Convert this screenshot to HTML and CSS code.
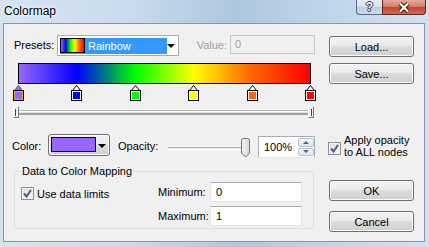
FILE: index.html
```html
<!DOCTYPE html>
<html lang="en">
<head>
    <meta charset="UTF-8">
    <title>Colormap</title>
    <link rel="stylesheet" href="styles.css">
</head>
<body>
<div class="window">
    <div class="titlebar">
        <span class="title">Colormap</span>
        <div class="caption">
            <span class="cap-btn help">?</span>
            <span class="cap-btn close">
                <svg width="14" height="11" viewBox="0 0 14 11"><path d="M3 1.5 L11 9.5 M11 1.5 L3 9.5" stroke="#3b1710" stroke-width="4.2"/><path d="M3 1.5 L11 9.5 M11 1.5 L3 9.5" stroke="#fff" stroke-width="2.2"/></svg>
            </span>
        </div>
    </div>

    <div class="client">
        <div class="main">
            <div class="presets-row">
                <span class="lbl presets-lbl">Presets:</span>
                <div class="combo presets-combo">
                    <div class="combo-sel">
                        <span class="ramp-icon"></span>
                        <span class="combo-text">Rainbow</span>
                    </div>
                    <span class="arrow"></span>
                </div>
                <span class="lbl disabled value-lbl">Value:</span>
                <div class="textbox disabled value-box">0</div>
            </div>

            <div class="ramp-bar"></div>

            <div class="stops">
                <svg width="11" height="17" viewBox="0 0 11 17"><path d="M1.5 6.5 L5.5 1.5 L9.5 6.5 Z" fill="#9966ff" stroke="#5b3fb0"/><rect x="0.5" y="6.5" width="10" height="10" fill="#9966ff" stroke="#000"/><rect x="1.5" y="7.5" width="8" height="8" fill="#9966ff" stroke="#f0a020"/></svg>
                <svg width="11" height="17" viewBox="0 0 11 17"><path d="M1.5 6.5 L5.5 1.5 L9.5 6.5 Z" fill="#fff" stroke="#000"/><rect x="0.5" y="6.5" width="10" height="10" fill="#fff" stroke="#000"/><rect x="2" y="8" width="7" height="7" fill="#0000ff"/></svg>
                <svg width="11" height="17" viewBox="0 0 11 17"><path d="M1.5 6.5 L5.5 1.5 L9.5 6.5 Z" fill="#fff" stroke="#000"/><rect x="0.5" y="6.5" width="10" height="10" fill="#fff" stroke="#000"/><rect x="2" y="8" width="7" height="7" fill="#00ff00"/></svg>
                <svg width="11" height="17" viewBox="0 0 11 17"><path d="M1.5 6.5 L5.5 1.5 L9.5 6.5 Z" fill="#fff" stroke="#000"/><rect x="0.5" y="6.5" width="10" height="10" fill="#fff" stroke="#000"/><rect x="2" y="8" width="7" height="7" fill="#ffff00"/></svg>
                <svg width="11" height="17" viewBox="0 0 11 17"><path d="M1.5 6.5 L5.5 1.5 L9.5 6.5 Z" fill="#fff" stroke="#000"/><rect x="0.5" y="6.5" width="10" height="10" fill="#fff" stroke="#000"/><rect x="2" y="8" width="7" height="7" fill="#ff6600"/></svg>
                <svg width="11" height="17" viewBox="0 0 11 17"><path d="M1.5 6.5 L5.5 1.5 L9.5 6.5 Z" fill="#fff" stroke="#000"/><rect x="0.5" y="6.5" width="10" height="10" fill="#fff" stroke="#000"/><rect x="2" y="8" width="7" height="7" fill="#ff0000"/></svg>
            </div>

            <div class="range">
                <div class="groove"></div>
                <span class="thumb thumb-left"></span>
                <span class="thumb thumb-right"></span>
            </div>

            <div class="color-row">
                <span class="lbl color-lbl">Color:</span>
                <div class="color-combo">
                    <span class="swatch"></span>
                    <span class="arrow"></span>
                </div>
                <span class="lbl opacity-lbl">Opacity:</span>
                <div class="opacity-slider">
                    <div class="track"></div>
                    <svg class="op-thumb" width="9" height="20" viewBox="0 0 9 20">
                        <defs><linearGradient id="tg" x1="0" x2="1" y1="0" y2="0"><stop offset="0" stop-color="#f4f4f4"/><stop offset="1" stop-color="#d9d9d9"/></linearGradient></defs>
                        <path d="M0.5 2.5 Q0.5 0.5 2.5 0.5 H6.5 Q8.5 0.5 8.5 2.5 V15 L4.5 19 L0.5 15 Z" fill="url(#tg)" stroke="#737373"/>
                    </svg>
                </div>
                <div class="spin">
                    <span class="spin-text">100%</span>
                    <div class="spin-btns">
                        <span class="spin-btn"><span class="up"></span></span>
                        <span class="spin-btn"><span class="down"></span></span>
                    </div>
                </div>
            </div>

            <fieldset class="group">
                <legend>Data to Color Mapping</legend>
                <div class="group-body">
                    <label class="check use-limits">
                        <span class="box"><svg width="9" height="9" viewBox="0 0 9 9"><path d="M1 4.5 L3.5 7.5 L8 1" fill="none" stroke="#4a5d92" stroke-width="2"/></svg></span>
                        <span>Use data limits</span>
                    </label>
                    <div class="limits">
                        <span class="lbl">Minimum:</span>
                        <div class="textbox">0</div>
                        <span class="lbl">Maximum:</span>
                        <div class="textbox">1</div>
                    </div>
                </div>
            </fieldset>
        </div>

        <div class="side">
            <button class="btn load">Load...</button>
            <button class="btn save">Save...</button>
            <label class="check apply">
                <span class="box"><svg width="9" height="9" viewBox="0 0 9 9"><path d="M1 4.5 L3.5 7.5 L8 1" fill="none" stroke="#4a5d92" stroke-width="2"/></svg></span>
                <span class="apply-text">Apply opacity<br>to ALL nodes</span>
            </label>
            <button class="btn ok">OK</button>
            <button class="btn cancel">Cancel</button>
        </div>
    </div>
</div>
</body>
</html>
```

FILE: styles.css
```css
body {
    margin: 0;
    font-family: "Liberation Sans", Arial, sans-serif;
    font-size: 11px;
    color: #000;
}
.window {
    width: 429px;
    height: 247px;
    box-sizing: border-box;
    padding: 0 4px 5px 3px;
    display: flex;
    flex-direction: column;
    background: linear-gradient(90deg, #d6e4f2 0%, #c9dbed 30%, #aec7df 55%, #bfd4e9 75%, #d2e1f0 100%);
}
.titlebar {
    height: 23px;
    display: flex;
    align-items: flex-start;
}
.title {
    font-size: 12px;
    line-height: 22px;
    margin-left: 1px;
    text-shadow: 0 0 6px #fff, 0 0 3px #fff;
}
.caption {
    margin-left: auto;
    margin-right: -1px;
    display: flex;
}
.cap-btn {
    height: 14px;
    box-sizing: content-box;
    border: 1px solid #5e6c7d;
    border-top: none;
    display: flex;
    align-items: center;
    justify-content: center;
}
.help {
    width: 25px;
    border-right: none;
    border-bottom-left-radius: 4px;
    background: linear-gradient(#e6eef6 0%, #d3e0ed 50%, #bccfe2 51%, #cbdaea 100%);
    color: #fff;
    font-weight: bold;
    font-size: 12px;
    line-height: 14px;
    text-shadow: 1px 0 0 #333, -1px 0 0 #333, 0 1px 0 #333, 0 -1px 0 #333;
}
.close {
    width: 42px;
    border-bottom-right-radius: 4px;
    border-color: #5a2a22;
    background: linear-gradient(#e3a89c 0%, #d7826f 45%, #c4462f 52%, #cf6a52 100%);
}
.client {
    flex: 1;
    display: flex;
    background: #f0f0f0;
    border: 1px solid #8596aa;
}
.lbl {
    line-height: 13px;
    white-space: nowrap;
}
.disabled {
    color: #a0a0a0;
}
.main {
    margin-left: 8px;
    padding-top: 11px;
    width: 303px;
    display: flex;
    flex-direction: column;
}
.presets-row {
    display: flex;
    align-items: center;
    height: 21px;
}
.presets-lbl {
    margin-left: 2px;
    width: 43px;
}
.combo {
    box-sizing: border-box;
    height: 21px;
    border: 1px solid #abadb3;
    background: #fff;
    padding: 2px;
    display: flex;
    align-items: center;
}
.presets-combo {
    width: 122px;
}
.combo-sel {
    width: 108px;
    height: 16px;
    background: #3399ff;
    display: flex;
    align-items: flex-start;
    align-self: flex-start;
}
.ramp-icon {
    width: 25px;
    height: 15px;
    box-sizing: border-box;
    border: 1px solid #000;
    background: linear-gradient(90deg, #9966ff, #0000ff 20%, #00ff00 40%, #ffff00 60%, #ff6600 80%, #ff0000);
}
.combo-text {
    color: #fff;
    margin-left: 3px;
    line-height: 16px;
}
.arrow {
    width: 0;
    height: 0;
    border-left: 4px solid transparent;
    border-right: 4px solid transparent;
    border-top: 4px solid #000;
    margin-left: auto;
    margin-right: 1px;
}
.value-lbl {
    margin-left: auto;
    margin-right: 3px;
}
.textbox {
    box-sizing: border-box;
    height: 20px;
    border: 1px solid #abadb3;
    border-left-color: #e2e3ea;
    border-right-color: #dbdfe6;
    border-bottom-color: #e3e9ef;
    background: #fff;
    padding-left: 5px;
    line-height: 18px;
}
.value-box {
    width: 85px;
    height: 19px;
    align-self: flex-start;
    background: #f0f0f0;
    border-color: #c7c7c7;
    padding-left: 4px;
    line-height: 17px;
}
.ramp-bar {
    margin: 7px 0 0 6px;
    width: 293px;
    height: 21px;
    box-sizing: border-box;
    border: 1px solid #000;
    background: linear-gradient(90deg, #9966ff, #0000ff 20%, #00ff00 40%, #ffff00 60%, #ff6600 80%, #ff0000);
}
.stops {
    margin-left: 1px;
    width: 303px;
    height: 17px;
    display: flex;
    justify-content: space-between;
}
.stops svg {
    display: block;
}
.range {
    position: relative;
    margin-top: 5px;
    height: 12px;
}
.groove {
    margin: 4px 0 0 2px;
    width: 300px;
    height: 5px;
    background: linear-gradient(#b9b9b9 0 1px, #fff 1px 2px, #e3e3e3 2px 3px, #a0a0a0 3px);
}
.thumb {
    position: absolute;
    top: 0;
    width: 6px;
    height: 12px;
    box-sizing: border-box;
    border: 1px solid #fff;
    border-right-color: #7d7d7d;
    border-bottom-color: #7d7d7d;
    background: #f0f0f0;
}
.thumb::after {
    content: "";
    position: absolute;
    top: 2px;
    bottom: 1px;
    width: 1px;
    background: #404040;
}
.thumb-left {
    left: 1px;
}
.thumb-left::after {
    left: 1px;
}
.thumb-right {
    left: 296px;
}
.thumb-right::after {
    right: 1px;
}
.color-row {
    margin-top: 16px;
    height: 24px;
    display: flex;
    align-items: center;
}
.color-lbl {
    width: 36px;
}
.color-combo {
    box-sizing: border-box;
    width: 62px;
    height: 22px;
    align-self: flex-start;
    border: 1px solid #707070;
    border-radius: 3px;
    padding: 2px 2px 0 2px;
    display: flex;
    align-items: flex-start;
    background: linear-gradient(#f2f2f2 0%, #ebebeb 45%, #dddddd 50%, #cfcfcf 100%);
    box-shadow: inset 0 0 0 1px #fcfcfc;
}
.swatch {
    width: 45px;
    height: 15px;
    box-sizing: border-box;
    border: 1px solid #000;
    background: #9966ff;
}
.color-combo .arrow {
    margin: 7px 1px 0 auto;
}
.opacity-lbl {
    margin-left: 8px;
    width: 50px;
}
.opacity-slider {
    position: relative;
    width: 82px;
    height: 24px;
}
.track {
    margin-top: 13px;
    width: 80px;
    height: 3px;
    background: linear-gradient(#b4b4b4 0 1px, #e6e6e6 1px 2px, #fff 2px);
}
.op-thumb {
    position: absolute;
    top: 4px;
    left: 73px;
    display: block;
}
.spin {
    margin-left: 8px;
    width: 57px;
    height: 22px;
    align-self: flex-end;
    box-sizing: border-box;
    border: 1px solid #abadb3;
    border-bottom-color: #e3e9ef;
    background: #fff;
    display: flex;
    align-items: center;
}
.spin-text {
    flex: 1;
    padding-left: 5px;
}
.spin-btns {
    width: 16px;
    align-self: stretch;
    padding: 1px 0;
    display: flex;
    flex-direction: column;
    gap: 1px;
}
.spin-btn {
    flex: 1;
    border: 1px solid #b6c2d0;
    border-radius: 2px;
    background: linear-gradient(#f6f8fb, #dce4ee);
    display: flex;
    align-items: center;
    justify-content: center;
}
.up, .down {
    width: 0;
    height: 0;
    border-left: 3px solid transparent;
    border-right: 3px solid transparent;
}
.up {
    border-bottom: 3px solid #4d6185;
}
.down {
    border-top: 3px solid #4d6185;
}
.group {
    margin: 7px 0 0 2px;
    width: 300px;
    box-sizing: border-box;
    min-width: 0;
    border: 1px solid #d5dfe5;
    border-radius: 3px;
    padding: 0 11px 2px 5px;
}
.group legend {
    padding: 0 2px;
    line-height: 13px;
}
.group-body {
    margin-top: 4px;
    display: flex;
    align-items: flex-start;
}
.check {
    display: flex;
    align-items: flex-start;
}
.box {
    width: 13px;
    height: 13px;
    box-sizing: border-box;
    border: 1px solid #8e8f8f;
    background: linear-gradient(135deg, #dcdcdc, #fbfbfb);
    box-shadow: inset 0 0 0 1px #f4f4f4;
    display: flex;
    align-items: center;
    justify-content: center;
    flex: none;
}
.box svg {
    display: block;
}
.use-limits {
    margin: 5px 0 0 1px;
    align-items: center;
    gap: 3px;
}
.limits {
    margin-left: auto;
    display: grid;
    grid-template-columns: 52px 92px;
    row-gap: 4px;
    align-items: center;
}
.btn {
    width: 85px;
    height: 21px;
    padding: 0;
    font-family: inherit;
    font-size: 11px;
    color: #000;
    border: 1px solid #707070;
    border-radius: 3px;
    background: linear-gradient(#f2f2f2 0%, #ebebeb 45%, #dddddd 50%, #cfcfcf 100%);
    box-shadow: inset 0 0 0 1px #fcfcfc;
}
.side {
    margin-left: 14px;
    padding-top: 12px;
    width: 85px;
    display: flex;
    flex-direction: column;
}
.save {
    margin-top: 6px;
}
.apply {
    margin: 50px 0 0 -1px;
    gap: 3px;
}
.apply .box {
    margin-top: 8px;
}
.apply-text {
    line-height: 12px;
    white-space: nowrap;
}
.ok {
    margin-top: 22px;
}
.cancel {
    margin-top: 10px;
}
```
